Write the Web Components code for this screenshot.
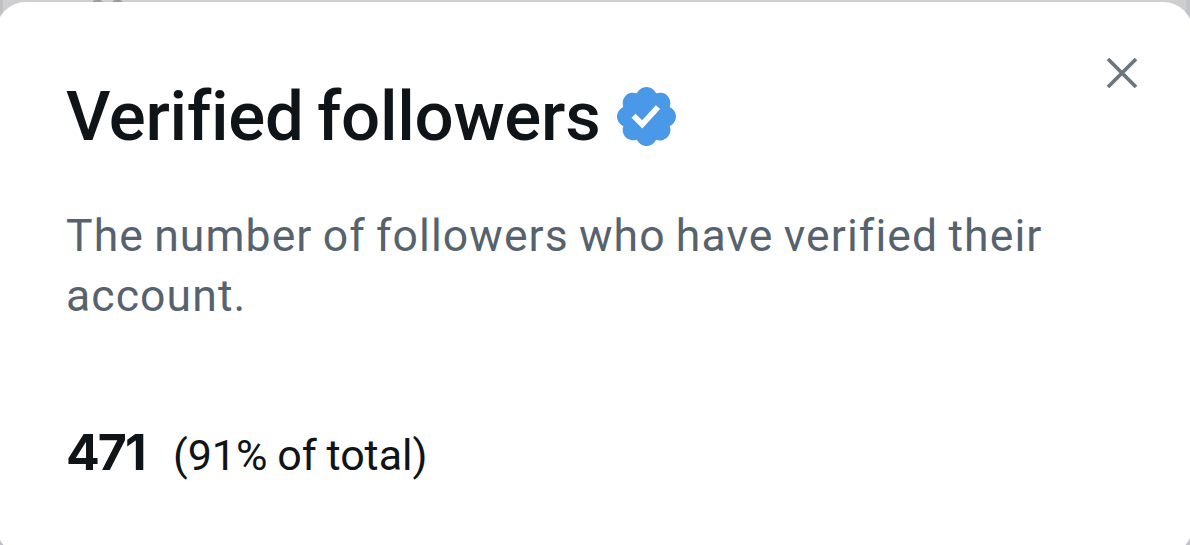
<!DOCTYPE html>
<html lang="en">
<head>
<meta charset="utf-8">
<title>Verified followers</title>
<style>
  html, body {
    margin: 0;
    height: 545px;
    overflow: hidden;
    background: #cfcfd1;
  }
  body {
    font-family: Roboto, "Liberation Sans", sans-serif;
    color: #0f1419;
  }
</style>
</head>
<body>
<metric-sheet>
  <sheet-title slot="title">Verified followers</sheet-title>
  <close-button slot="close"></close-button>
  <sheet-text slot="text">The number of followers who have verified their account.</sheet-text>
  <metric-value slot="value" share="(91% of total)">471</metric-value>
</metric-sheet>

<script>
class MetricSheet extends HTMLElement {
  constructor() {
    super();
    this.attachShadow({ mode: 'open' });
    this.shadowRoot.innerHTML = `
      <style>
        :host {
          display: block;
          height: 545px;
          overflow: hidden;
          background: linear-gradient(90deg, #bfc1c6 0 3px, #cfcfd1 3px 1186px, #c2c4c9 1186px);
        }
        /* what is left of the page behind the sheet */
        .behind {
          display: block;
          width: 200px;
          height: 2px;
        }
        .sheet {
          box-sizing: border-box;
          height: 553px;
          margin: 0 -3px 0 -4px;
          padding: 79px 55px 0 70px;
          border-radius: 30px;
          background: #fff;
        }
        header {
          display: flex;
          justify-content: space-between;
          align-items: flex-start;
        }
        slot[name="close"] {
          display: block;
          margin-top: -24px;
        }
      </style>
      <svg class="behind" viewBox="0 0 200 2">
        <circle cx="97.5" cy="6" r="6.5" fill="#9b9ba1"/>
        <circle cx="117.5" cy="6" r="6.5" fill="#9b9ba1"/>
      </svg>
      <div class="sheet">
        <header>
          <slot name="title"></slot>
          <slot name="close"></slot>
        </header>
        <slot name="text"></slot>
        <slot name="value"></slot>
      </div>
    `;
  }
}

class SheetTitle extends HTMLElement {
  constructor() {
    super();
    this.attachShadow({ mode: 'open' });
    this.shadowRoot.innerHTML = `
      <style>
        :host {
          display: flex;
          align-items: center;
          height: 70px;
          font-size: 69px;
          font-weight: 500;
          line-height: 72px;
          letter-spacing: -0.28px;
          word-spacing: -3.4px;
          white-space: nowrap;
        }
        .text {
          width: 551px;
          padding-top: 2px;
        }
        svg {
          width: 59px;
          height: 59px;
          fill: #4a99e9;
        }
      </style>
      <span class="text"><slot></slot></span>
      <svg viewBox="1.6 1.6 18.8 18.8"><path d="M20.396 11c-.018-.646-.215-1.275-.57-1.816-.354-.54-.852-.972-1.438-1.246.223-.607.27-1.264.14-1.897-.131-.634-.437-1.218-.882-1.687-.47-.445-1.053-.75-1.687-.882-.633-.13-1.29-.083-1.897.14-.273-.587-.704-1.086-1.245-1.44S11.647 1.62 11 1.604c-.646.017-1.273.213-1.813.568s-.969.854-1.24 1.44c-.608-.223-1.267-.272-1.902-.14-.635.13-1.22.436-1.69.882-.445.47-.749 1.055-.878 1.688-.13.633-.08 1.29.144 1.896-.587.274-1.087.705-1.443 1.245-.356.54-.555 1.17-.574 1.817.02.647.218 1.276.574 1.817.356.54.856.972 1.443 1.245-.224.606-.274 1.263-.144 1.896.13.634.433 1.218.877 1.688.47.443 1.054.747 1.687.878.633.132 1.29.084 1.897-.136.274.586.705 1.084 1.246 1.439.54.354 1.17.551 1.816.569.647-.016 1.276-.213 1.817-.567s.972-.854 1.245-1.44c.604.239 1.266.296 1.903.164.636-.132 1.22-.447 1.68-.907.46-.46.776-1.044.908-1.681s.075-1.299-.165-1.903c.586-.274 1.084-.705 1.439-1.246.354-.54.551-1.17.569-1.816zM9.662 14.85l-3.429-3.428 1.293-1.302 2.072 2.072 4.4-4.794 1.347 1.246z"/></svg>
    `;
  }
}

class CloseButton extends HTMLElement {
  constructor() {
    super();
    this.attachShadow({ mode: 'open' });
    this.shadowRoot.innerHTML = `
      <style>
        :host {
          display: block;
          width: 32px;
          height: 32px;
        }
        svg {
          display: block;
          stroke: #6d767e;
          stroke-width: 3.8;
        }
      </style>
      <svg width="32" height="32" viewBox="0 0 32 32"><path d="M2 2l28 28M30 2L2 30"/></svg>
    `;
  }
}

class SheetText extends HTMLElement {
  constructor() {
    super();
    this.attachShadow({ mode: 'open' });
    this.shadowRoot.innerHTML = `
      <style>
        :host {
          display: block;
          margin-top: 55px;
          font-size: 44.5px;
          line-height: 60px;
          letter-spacing: 1.1px;
          word-spacing: -1.95px;
          color: #56636e;
        }
      </style>
      <slot></slot>
    `;
  }
}

class MetricValue extends HTMLElement {
  constructor() {
    super();
    this.attachShadow({ mode: 'open' });
    this.shadowRoot.innerHTML = `
      <style>
        :host {
          display: flex;
          align-items: baseline;
          margin-top: 96px;
          line-height: 60px;
          white-space: nowrap;
        }
        .value {
          width: 107px;
          font-family: Inter, Roboto, sans-serif;
          font-size: 50px;
          font-weight: 700;
          letter-spacing: -2px;
        }
        .share {
          font-size: 43px;
          letter-spacing: -0.05px;
          word-spacing: -0.7px;
        }
      </style>
      <span class="value"><slot></slot></span>
      <span class="share">${this.getAttribute('share')}</span>
    `;
  }
}

customElements.define('metric-sheet', MetricSheet);
customElements.define('sheet-title', SheetTitle);
customElements.define('close-button', CloseButton);
customElements.define('sheet-text', SheetText);
customElements.define('metric-value', MetricValue);
</script>
</body>
</html>
